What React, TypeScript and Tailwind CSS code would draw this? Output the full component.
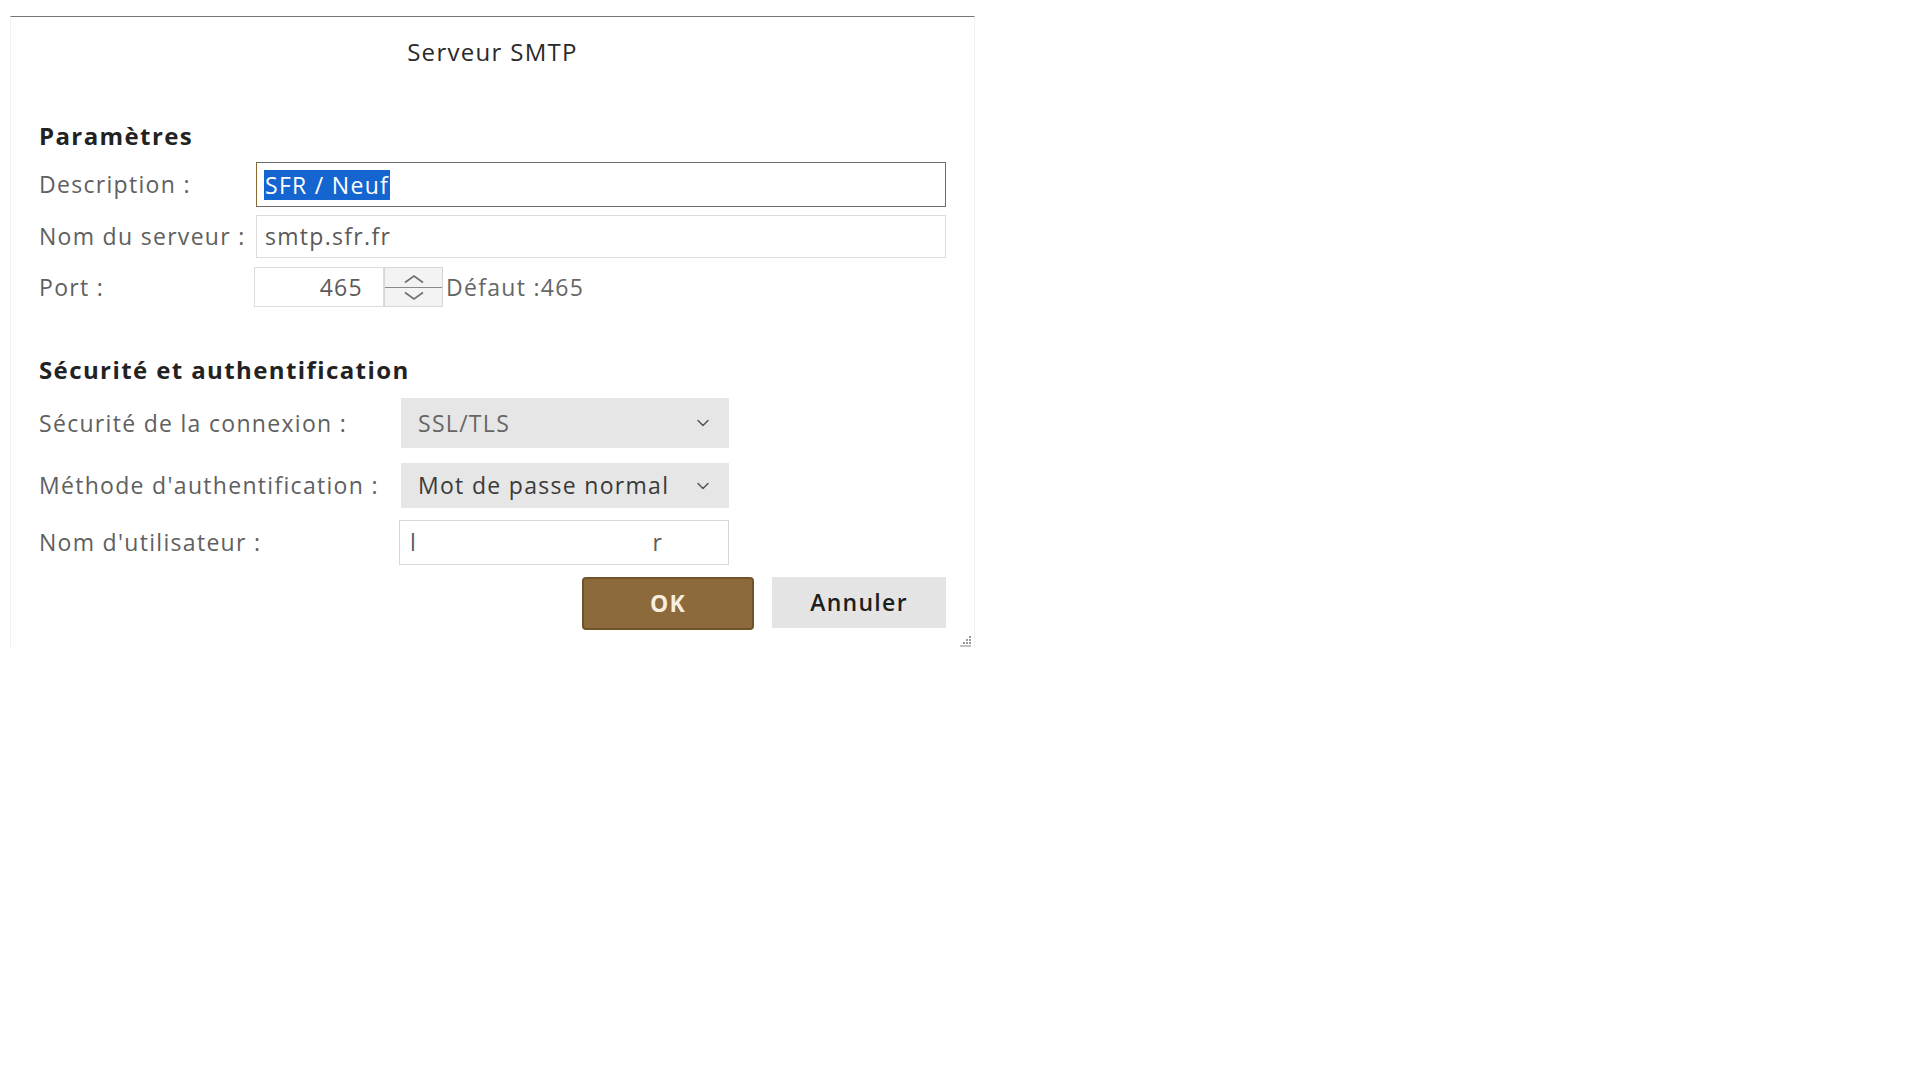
import { ChevronDown } from 'lucide-react';

function Label({ text, width }: { text: string; width: string }) {
  return (
    <div className={`${width} shrink-0 whitespace-nowrap text-[23px] tracking-[1.3px] text-[#606060]`}>{text}</div>
  );
}

function SelectBox({ value, dark }: { value: string; dark?: boolean }) {
  return (
    <div className="flex h-full w-[328px] items-center justify-between bg-[#e6e6e6] pl-[17px] pr-[16px]">
      <span className={`whitespace-nowrap text-[23px] tracking-[1.3px] ${dark ? 'text-[#3a3a3a]' : 'text-[#666]'}`}>
        {value}
      </span>
      <ChevronDown className="h-[20px] w-[20px] shrink-0 text-[#555]" strokeWidth={1.8} />
    </div>
  );
}

function SpinChevron({ up }: { up?: boolean }) {
  return (
    <svg width="24" height="10" viewBox="0 0 24 10" fill="none" stroke="#707070" strokeWidth="1.6">
      {up ? <path d="M3 8.5 L12 2 L21 8.5" /> : <path d="M3 1.5 L12 8 L21 1.5" />}
    </svg>
  );
}

function ResizeGrip() {
  return (
    <svg width="14" height="14" viewBox="0 0 14 14" className="text-[#9a9a9a]">
      <rect x="11" y="2" width="2" height="2" fill="currentColor" />
      <rect x="8" y="5" width="2" height="2" fill="currentColor" />
      <rect x="11" y="5" width="2" height="2" fill="currentColor" />
      <rect x="5" y="8" width="2" height="2" fill="currentColor" />
      <rect x="8" y="8" width="2" height="2" fill="currentColor" />
      <rect x="11" y="8" width="2" height="2" fill="currentColor" />
      <rect x="2" y="11" width="11" height="2" fill="currentColor" opacity="0.6" />
    </svg>
  );
}

export default function App() {
  return (
    <div className="min-h-screen bg-white font-['Open_Sans',sans-serif]">
      <div className="ml-[10px] w-[965px] pt-[16px]">
        <div className="border-t border-l border-r border-t-[#767676] border-l-[#f2f2f2] border-r-[#f2f2f2] px-[28px]">
          <div className="flex h-[70px] items-center justify-center text-[24px] tracking-[1.3px] text-[#2a2a2a]">
            Serveur SMTP
          </div>

          {/* Paramètres */}
          <div className="mt-[33px] flex h-[32px] items-center text-[24px] font-bold tracking-[1.4px] text-[#222]">
            Paramètres
          </div>

          <div className="mt-[10px] flex h-[45px] items-center">
            <Label text="Description :" width="w-[217px]" />
            <div className="flex h-full flex-1 items-center border border-[#6a6a6a] border-l-[#8a6a30] pl-[7px]">
              <span className="bg-[#1565d0] px-[1px] text-[23px] leading-[30px] tracking-[1.3px] text-white">
                SFR / Neuf
              </span>
            </div>
          </div>

          <div className="mt-[8px] flex h-[43px] items-center">
            <Label text="Nom du serveur :" width="w-[217px]" />
            <div className="flex h-full flex-1 items-center border border-[#dcdcdc] pl-[8px] text-[23px] tracking-[1.3px] text-[#5a5a5a]">
              smtp.sfr.fr
            </div>
          </div>

          <div className="mt-[9px] flex h-[40px] items-center">
            <Label text="Port :" width="w-[215px]" />
            <div className="flex h-full w-[130px] items-center justify-end border border-[#dcdcdc] pr-[20px] text-[23px] tracking-[1.3px] text-[#5a5a5a]">
              465
            </div>
            <div className="flex h-full w-[59px] flex-col items-center justify-center gap-[3px] border border-[#d6d6d6] bg-[#f3f3f3]">
              <SpinChevron up />
              <div className="h-px w-full bg-[#8a8a8a]" />
              <SpinChevron />
            </div>
            <div className="ml-[3px] whitespace-nowrap text-[23px] tracking-[1.3px] text-[#666]">Défaut :465</div>
          </div>

          {/* Sécurité et authentification */}
          <div className="mt-[47px] flex h-[32px] items-center text-[24px] font-bold tracking-[1.4px] text-[#222]">
            Sécurité et authentification
          </div>

          <div className="mt-[12px] flex h-[50px] items-center">
            <Label text="Sécurité de la connexion :" width="w-[362px]" />
            <SelectBox value="SSL/TLS" />
          </div>

          <div className="mt-[15px] flex h-[45px] items-center">
            <Label text="Méthode d'authentification :" width="w-[362px]" />
            <SelectBox value="Mot de passe normal" dark />
          </div>

          <div className="mt-[12px] flex h-[45px] items-center">
            <Label text="Nom d'utilisateur :" width="w-[360px]" />
            <div className="flex h-full w-[330px] items-center border border-[#d8d8d8] pl-[10px] pr-[66px] text-[23px] text-[#5a5a5a]">
              <span>l</span>
              <span className="ml-auto">r</span>
            </div>
          </div>

          <div className="mt-[12px] flex h-[53px] items-start justify-end gap-[18px]">
            <button className="flex h-[53px] w-[172px] items-center justify-center rounded-[4px] border-2 border-[#6e5428] bg-[#8c6a3c] text-[23px] font-bold tracking-[1.3px] text-[#f6eede]">
              OK
            </button>
            <button className="flex h-[51px] w-[174px] items-center justify-center bg-[#e4e4e4] text-[23px] font-semibold tracking-[1.3px] text-[#1e1e1e]">
              Annuler
            </button>
          </div>

          <div className="-mr-[26px] flex h-[18px] items-end justify-end">
            <ResizeGrip />
          </div>
        </div>
      </div>
    </div>
  );
}
